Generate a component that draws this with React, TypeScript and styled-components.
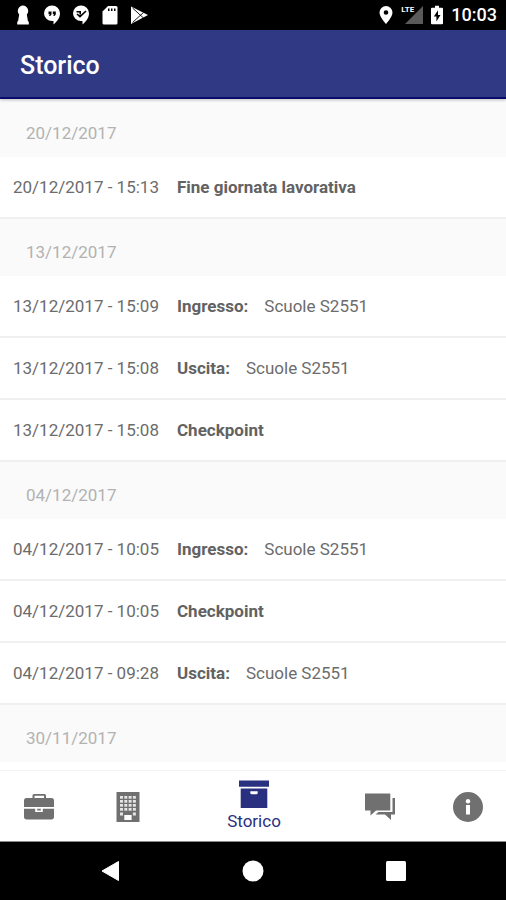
import React from "react";
import styled, { createGlobalStyle } from "styled-components";

const GlobalStyle = createGlobalStyle`
  * { box-sizing: border-box; }
  body { margin: 0; font-family: Roboto, "Noto Sans", sans-serif; background: #fff; }
  h1, h2, ul { margin: 0; padding: 0; }
  ul { list-style: none; }
  button { border: 0; padding: 0; background: none; font: inherit; color: inherit; cursor: pointer; }
  svg { display: block; }
`;

const Screen = styled.div`
  display: flex;
  flex-direction: column;
  height: 100vh;
  overflow: hidden;
`;

const StatusBar = styled.div`
  display: flex;
  justify-content: space-between;
  align-items: center;
  flex: none;
  height: 30px;
  padding: 0 9px 0 13px;
  background: #000;
  color: #fff;
`;

const StatusIcons = styled.div`
  display: flex;
  align-items: center;
  gap: 9px;
`;

const StatusInfo = styled.div`
  display: flex;
  align-items: center;
  gap: 8px;
`;

const Signal = styled.div`
  position: relative;
  width: 22px;
  height: 20px;

  svg {
    margin-left: auto;
  }
`;

const NetworkType = styled.span`
  position: absolute;
  top: 0;
  left: 0;
  font-size: 8px;
  font-weight: 700;
  line-height: 10px;
`;

const Clock = styled.time`
  font-size: 18px;
  font-weight: 500;
  line-height: 24px;
`;

const AppBar = styled.header`
  display: flex;
  align-items: center;
  flex: none;
  height: 69px;
  padding: 4px 20px 0;
  background: #303983;
  color: #fff;
  border-bottom: 2px solid #0a0a6e;
  box-shadow: 0 1px 3px rgba(0, 0, 0, 0.25);
  z-index: 1;
`;

const Title = styled.h1`
  font-size: 25px;
  font-weight: 500;
  line-height: 32px;
`;

const History = styled.main`
  flex: 1;
  min-height: 0;
  overflow: hidden;
  background: #fff;
`;

const DayHeading = styled.h2`
  height: 58px;
  padding: 22px 26px 0;
  background: #fafafa;
  color: #b2b2b2;
  font-size: 17px;
  font-weight: 400;
  line-height: 24px;
`;

const EntryList = styled.ul`
  display: grid;
  grid-auto-rows: 62px;
  margin-bottom: -1px;
`;

const Entry = styled.li`
  display: flex;
  align-items: center;
  padding: 0 13px;
  border-bottom: 2px solid #f0f0f0;
  color: #6c6c6c;
  font-size: 17px;
  line-height: 24px;
  white-space: nowrap;
`;

const Stamp = styled.time`
  flex: none;
  width: 164px;
`;

const Action = styled.strong`
  margin-right: 16px;
  color: #626262;
  font-weight: 700;
`;

const TabBar = styled.nav`
  display: grid;
  grid-template-columns: 78fr 100fr 152fr 100fr 76fr;
  flex: none;
  height: 72px;
  border-top: 1px solid #f3f3f3;
  border-bottom: 1px solid #8a8a8a;
  background: #fff;
`;

const Tab = styled.button<{ $active?: boolean }>`
  display: flex;
  flex-direction: column;
  align-items: center;
  justify-content: center;
  gap: 1px;
  padding-top: 1px;
  color: ${(p) => (p.$active ? "#29307f" : "#707070")};
  font-size: 17px;
  line-height: 24px;
`;

const SystemNav = styled.div`
  display: flex;
  justify-content: space-around;
  align-items: center;
  flex: none;
  height: 58px;
  padding: 0 38px;
  background: #000;
  color: #fff;
`;

const SystemButton = styled.button`
  display: grid;
  place-items: center;
  width: 72px;
  height: 58px;
`;

const Keyhole = () => (
  <svg width="20" height="20" viewBox="0 0 20 20" fill="currentColor">
    <path d="M10 .5a5.500 5.500 0 0 1 3.800 9.100l1.200 6.900h.8v3H4.200v-3H5l1.200-6.900A5.500 5.500 0 0 1 10 .5Z" />
  </svg>
);

const Quotes = () => (
  <svg width="20" height="20" viewBox="0 0 20 20">
    <path fill="currentColor" d="M10 .5a8 7.800 0 0 1 8 7.800c0 4.800-3.300 8.600-6.500 11.200v-3.400H10A8 7.800 0 0 1 10 .5Z" />
    <path fill="#000" d="M6.500 6.500h3v3L8.200 11H7l.8-1.700H6.500zM10.800 6.500h3v3L12.500 11h-1.200l.8-1.700h-1.300z" />
  </svg>
);

const Checked = () => (
  <svg width="20" height="20" viewBox="0 0 20 20">
    <path fill="currentColor" d="M10 .5a8 7.800 0 0 1 8 7.800c0 4.800-3.300 8.600-6.500 11.200v-3.400H10A8 7.800 0 0 1 10 .5Z" />
    <path fill="none" stroke="#000" strokeWidth="1.600" d="m6 9 3 2.700L15 6M5.500 6.800h3.700v2.700" />
  </svg>
);

const SdCard = () => (
  <svg width="20" height="20" viewBox="0 0 20 20">
    <path fill="currentColor" d="M8 1h8a1.500 1.500 0 0 1 1.500 1.500v15.500a1.500 1.500 0 0 1-1.500 1.500H4A1.500 1.500 0 0 1 2.500 18V6.500z" />
    <path fill="#000" d="M8 3.500h1.500V6H8zM11 3.500h1.500V6H11zM14 3.500h1.500V6H14z" />
  </svg>
);

const Play = () => (
  <svg width="20" height="20" viewBox="0 0 20 20">
    <path fill="currentColor" d="M2 1.500 19 10 2 19z" />
    <path fill="none" stroke="#000" strokeWidth=".9" d="m3.500 3 11 10M3.500 17.500l11-10" />
  </svg>
);

const Pin = () => (
  <svg width="14" height="20" viewBox="0 0 14 20">
    <path
      fill="currentColor"
      fillRule="evenodd"
      d="M7 1a6.500 6.500 0 0 1 6.500 6.500C13.500 12 7 19 7 19S.5 12 .5 7.500A6.500 6.500 0 0 1 7 1Zm0 4.200a2.300 2.300 0 1 0 0 4.600 2.300 2.300 0 0 0 0-4.600Z"
    />
  </svg>
);

const Strength = () => (
  <svg width="18" height="20" viewBox="0 0 18 20">
    <path fill="#5a5a5a" d="M18 1v18H0z" />
  </svg>
);

const Battery = () => (
  <svg width="12" height="20" viewBox="0 0 12 20">
    <path fill="currentColor" d="M4 .8h4v1.900h3a1 1 0 0 1 1 1v14.600a1 1 0 0 1-1 1H1a1 1 0 0 1-1-1V3.700a1 1 0 0 1 1-1h3z" />
    <path fill="#000" d="M7 5.200 2.800 11.500h2.600v5L9.500 10H7z" />
  </svg>
);

const Briefcase = () => (
  <svg width="30" height="30" viewBox="0 0 30 30" fill="currentColor">
    <path
      fillRule="evenodd"
      d="M8.500 6V3.500A1.500 1.500 0 0 1 10 2h10.500A1.500 1.500 0 0 1 22 3.500V6h5.500A2.500 2.500 0 0 1 30 8.500V15H0V8.500A2.500 2.500 0 0 1 2.500 6zm2 0H20V3.800h-9.500z"
    />
    <path d="M0 16.800h11.200V20h7.600v-3.200H30v8a2.700 2.700 0 0 1-2.700 2.700H2.700A2.700 2.700 0 0 1 0 24.800z" />
    <path d="M13.200 16.800h3.600v1.700h-3.600z" />
  </svg>
);

const Building = () => (
  <svg width="24" height="30" viewBox="0 0 24 30">
    <path fill="currentColor" d="M.5 0h23v30H.5z" />
    <g fill="#e4e4e4">
      {[4, 8, 12, 16].map((y) =>
        [4, 8.300, 12.600, 16.900].map((x) => <path key={`${x}-${y}`} d={`M${x} ${y}h3v2.700h-3z`} />)
      )}
      <path d="M4 20.500h3v3H4zM16.900 20.500h3v3h-3z" />
    </g>
    <path fill="#fff" d="M8.300 23h7.300v5H8.300z" />
  </svg>
);

const Archive = () => (
  <svg width="30" height="28" viewBox="0 0 30 28">
    <path fill="currentColor" d="M0 .5h30v6.300H0zM1.700 8.500h26.600V28H1.700z" />
    <path fill="#fff" d="M11.300 11.300h7.400v1.500a1.500 1.500 0 0 1-1.500 1.500h-4.400a1.500 1.500 0 0 1-1.500-1.500z" />
  </svg>
);

const Chats = () => (
  <svg width="30" height="28" viewBox="0 0 30 28" fill="currentColor">
    <path d="M0 .5h25.300v17H11L5.500 22.500v-5H0z" />
    <path d="M27.500 5H30v16.500h-4V27l-6-5.500h-9.500l3-2.400h14z" />
  </svg>
);

const Info = () => (
  <svg width="30" height="30" viewBox="0 0 30 30">
    <circle cx="15" cy="15" r="15" fill="currentColor" />
    <path fill="#fff" d="M13 13h4v9.500h-4z" />
    <circle cx="15" cy="9.200" r="2.200" fill="#fff" />
  </svg>
);

type Item = { time: string; action: string; place?: string };

const days: { date: string; items: Item[] }[] = [
  { date: "20/12/2017", items: [{ time: "15:13", action: "Fine giornata lavorativa" }] },
  {
    date: "13/12/2017",
    items: [
      { time: "15:09", action: "Ingresso:", place: "Scuole S2551" },
      { time: "15:08", action: "Uscita:", place: "Scuole S2551" },
      { time: "15:08", action: "Checkpoint" },
    ],
  },
  {
    date: "04/12/2017",
    items: [
      { time: "10:05", action: "Ingresso:", place: "Scuole S2551" },
      { time: "10:05", action: "Checkpoint" },
      { time: "09:28", action: "Uscita:", place: "Scuole S2551" },
    ],
  },
  { date: "30/11/2017", items: [] },
];

export default function App() {
  return (
    <Screen>
      <GlobalStyle />
      <StatusBar>
        <StatusIcons>
          <Keyhole />
          <Quotes />
          <Checked />
          <SdCard />
          <Play />
        </StatusIcons>
        <StatusInfo>
          <Pin />
          <Signal>
            <Strength />
            <NetworkType>LTE</NetworkType>
          </Signal>
          <Battery />
          <Clock>10:03</Clock>
        </StatusInfo>
      </StatusBar>
      <AppBar>
        <Title>Storico</Title>
      </AppBar>
      <History>
        {days.map((day) => (
          <section key={day.date}>
            <DayHeading>{day.date}</DayHeading>
            {day.items.length > 0 && (
              <EntryList>
                {day.items.map((item, i) => (
                  <Entry key={i}>
                    <Stamp>
                      {day.date} - {item.time}
                    </Stamp>
                    <Action>{item.action}</Action>
                    {item.place && <span>{item.place}</span>}
                  </Entry>
                ))}
              </EntryList>
            )}
          </section>
        ))}
      </History>
      <TabBar>
        <Tab aria-label="Lavoro"><Briefcase /></Tab>
        <Tab aria-label="Sedi"><Building /></Tab>
        <Tab $active aria-current="page">
          <Archive />
          Storico
        </Tab>
        <Tab aria-label="Messaggi"><Chats /></Tab>
        <Tab aria-label="Info"><Info /></Tab>
      </TabBar>
      <SystemNav>
        <SystemButton aria-label="Indietro">
          <svg width="20" height="22" viewBox="0 0 20 22">
            <path fill="#fff" stroke="#fff" strokeLinejoin="round" d="M18.500 1.500v19L2 11z" />
          </svg>
        </SystemButton>
        <SystemButton aria-label="Home">
          <svg width="22" height="22" viewBox="0 0 22 22">
            <circle cx="11" cy="11" r="10.500" fill="#fff" />
          </svg>
        </SystemButton>
        <SystemButton aria-label="Recenti">
          <svg width="20" height="20" viewBox="0 0 20 20">
            <rect width="20" height="20" rx="1.500" fill="#fff" />
          </svg>
        </SystemButton>
      </SystemNav>
    </Screen>
  );
}
